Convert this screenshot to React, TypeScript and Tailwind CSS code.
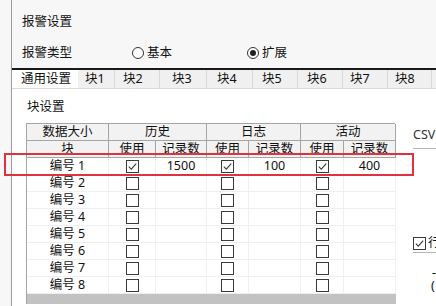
import React from "react";

function Box({ checked }: { checked?: boolean }) {
  return (
    <div className="w-[13px] h-[13px] border border-[#3a3a3a] bg-white flex items-center justify-center">
      {checked && (
        <svg width="11" height="11" viewBox="0 0 11 11">
          <path d="M1.8 5.6 L4.3 8.1 L9.2 2.6" stroke="#3a3a3a" strokeWidth="1.1" fill="none" />
        </svg>
      )}
    </div>
  );
}

function Radio({ checked }: { checked?: boolean }) {
  return (
    <div className="w-[12px] h-[12px] rounded-full border border-[#333] bg-white flex items-center justify-center">
      {checked && <div className="w-[6px] h-[6px] rounded-full bg-[#222]" />}
    </div>
  );
}

const tabs: { label: string; w: string; pl: string }[] = [
  { label: "块1", w: "w-[37px]", pl: "pl-[7px]" },
  { label: "块2", w: "w-[45px]", pl: "pl-[8px]" },
  { label: "块3", w: "w-[47px]", pl: "pl-[12px]" },
  { label: "块4", w: "w-[46px]", pl: "pl-[10px]" },
  { label: "块5", w: "w-[45px]", pl: "pl-[9px]" },
  { label: "块6", w: "w-[45px]", pl: "pl-[9px]" },
  { label: "块7", w: "w-[45px]", pl: "pl-[7px]" },
  { label: "块8", w: "w-[44px]", pl: "pl-[7px]" },
];

const hcell = "border-r border-b border-[#a5a5a5] bg-[#f2f2f2] flex items-center justify-center h-[17px]";
const bcell = "border-r border-b border-[#efefef] flex items-center justify-center h-[17px]";

export default function App() {
  const rows = [1, 2, 3, 4, 5, 6, 7, 8];
  return (
    <div className="relative w-[436px] h-[306px] overflow-hidden bg-[#f7f7f7] text-[12.5px] text-[#111] [font-family:'Noto_Sans','Noto_Sans_CJK_SC',sans-serif] leading-[14px]">
      <div className="flex h-full">
        <div className="w-[11px] shrink-0" />
        <div className="flex-1 flex flex-col border-l border-[#9a9a9a] min-w-0">
          {/* top section */}
          <div className="h-[68px] bg-[#f7f7f7] pl-[10px] flex flex-col">
            <div className="mt-[15px]">报警设置</div>
            <div className="mt-[17px] flex items-center">
              <span className="w-[110px]">报警类型</span>
              <Radio />
              <span className="ml-[3px] w-[100px]">基本</span>
              <Radio checked />
              <span className="ml-[3px]">扩展</span>
            </div>
          </div>
          <div className="h-[2px] bg-[#1a1a1a]" />
          {/* tabs */}
          <div className="h-[19px] flex bg-[#f0f0f0] border-b border-[#dadada]">
            <div className="w-[66px] bg-white pl-[9px] flex items-center">通用设置</div>
            {tabs.map((t) => (
              <div key={t.label} className={`${t.w} ${t.pl} flex items-center border-r border-[#d8d8d8]`}>
                {t.label}
              </div>
            ))}
          </div>
          {/* content */}
          <div className="flex-1 bg-white flex">
            <div className="ml-[14px] flex flex-col">
              <div className="mt-[11px] ml-[1px]">块设置</div>
              <div className="mt-[9px] w-[369px] border-l border-t border-[#a5a5a5] grid grid-cols-[82px_47px_51px_42px_52px_43px_52px]">
                <div className={hcell}>数据大小</div>
                <div className={`${hcell} col-span-2`}>历史</div>
                <div className={`${hcell} col-span-2`}>日志</div>
                <div className={`${hcell} col-span-2`}>活动</div>
                <div className={hcell}>块</div>
                <div className={hcell}>使用</div>
                <div className={hcell}>记录数</div>
                <div className={hcell}>使用</div>
                <div className={hcell}>记录数</div>
                <div className={hcell}>使用</div>
                <div className={hcell}>记录数</div>
                {rows.map((r) => (
                  <React.Fragment key={r}>
                    <div className={bcell}>编号 {r}</div>
                    <div className={bcell}><Box checked={r === 1} /></div>
                    <div className={bcell}>{r === 1 ? "1500" : ""}</div>
                    <div className={bcell}><Box checked={r === 1} /></div>
                    <div className={bcell}>{r === 1 ? "100" : ""}</div>
                    <div className={bcell}><Box checked={r === 1} /></div>
                    <div className={bcell}>{r === 1 ? "400" : ""}</div>
                  </React.Fragment>
                ))}
                <div className="col-span-7 h-[10px] bg-[#c2c2c2]" />
              </div>
            </div>
            <div className="ml-[18px] flex-1 flex flex-col">
              <div className="mt-[39px] text-[#333]">CSV</div>
              <div className="mt-[6px] h-px bg-[#b5b5b5]" />
              <div className="mt-[87px] flex items-center">
                <Box checked />
                <span className="ml-[2px]">行</span>
              </div>
              <div className="mt-[2px] h-px bg-[#b5b5b5]" />
              <div className="mt-[14px] pl-[19px] leading-[12px] h-[12px]">-</div>
              <div className="mt-[1px] pl-[18px] leading-[12px] h-[12px]">(</div>
            </div>
          </div>
        </div>
      </div>
      {/* red annotation */}
      <div className="absolute left-[4px] top-[153px] w-[410px] h-[23px] border-2 border-[#e0313f]" />
    </div>
  );
}
